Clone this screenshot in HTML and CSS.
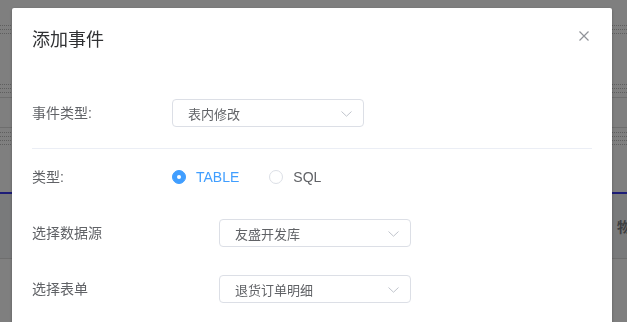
FILE: index.html
```html
<!DOCTYPE html>
<html lang="zh-CN">
    <head>
        <meta charset="utf-8">
        <title>添加事件</title>
        <meta name="viewport" content="width=device-width, initial-scale=1">
        <link rel="stylesheet" href="styles.css">
    </head>
    <body>

       <!-- page behind the dialog -->
       <div class="page">
           <div class="page__dots page__dots--first"><span></span><span></span><span></span></div>
           <div class="page__dots page__dots--second"><span></span><span></span><span></span></div>
           <div class="page__rule page__rule--a"></div>
           <div class="page__rule page__rule--b"></div>
           <div class="page__dots page__dots--third"><span></span><span></span><span></span><span></span></div>
           <div class="page__rule page__rule--blue"></div>
           <div class="page__head"><span class="page__head-text">物</span></div>
           <div class="page__rule"></div>
       </div>

       <div class="dialog active">
           <div class="dialog__panel">
               <div class="dialog__header">
                   <span class="dialog__title">添加事件</span>
                   <button class="dialog__close" aria-label="关闭">
                       <svg width="10" height="10" viewBox="0 0 10 10">
                           <path d="M0.5 0.5 L9.5 9.5 M9.5 0.5 L0.5 9.5" stroke="#909399" stroke-width="1.2" fill="none"/>
                       </svg>
                   </button>
               </div>

               <div class="dialog__body">
                   <div class="form-row">
                       <label class="form-row__label">事件类型:</label>
                       <div class="select">
                           <span class="select__value">表内修改</span>
                           <svg class="select__arrow" width="11" height="6" viewBox="0 0 11 6">
                               <path d="M0.5 0.5 L5.5 5.2 L10.5 0.5" stroke="#c0c4cc" stroke-width="1" fill="none"/>
                           </svg>
                       </div>
                   </div>

                   <div class="divider"></div>

                   <div class="form-row form-row--radio">
                       <label class="form-row__label">类型:</label>
                       <div class="radio-group">
                           <label class="radio radio--checked">
                               <span class="radio__dot"></span>
                               <span class="radio__text">TABLE</span>
                           </label>
                           <label class="radio">
                               <span class="radio__dot"></span>
                               <span class="radio__text">SQL</span>
                           </label>
                       </div>
                   </div>

                   <div class="form-row form-row--wide">
                       <label class="form-row__label">选择数据源</label>
                       <div class="select">
                           <span class="select__value">友盛开发库</span>
                           <svg class="select__arrow" width="11" height="6" viewBox="0 0 11 6">
                               <path d="M0.5 0.5 L5.5 5.2 L10.5 0.5" stroke="#c0c4cc" stroke-width="1" fill="none"/>
                           </svg>
                       </div>
                   </div>

                   <div class="form-row form-row--wide">
                       <label class="form-row__label">选择表单</label>
                       <div class="select">
                           <span class="select__value">退货订单明细</span>
                           <svg class="select__arrow" width="11" height="6" viewBox="0 0 11 6">
                               <path d="M0.5 0.5 L5.5 5.2 L10.5 0.5" stroke="#c0c4cc" stroke-width="1" fill="none"/>
                           </svg>
                       </div>
                   </div>
               </div>
           </div>
       </div>

    </body>
</html>
```

FILE: styles.css
```css
* {
    box-sizing: border-box;
}

body {
    margin: 0;
    padding: 0;
    background-color: #fff;
    font-family: "Liberation Sans", "Noto Sans CJK SC", sans-serif;
    overflow: hidden;
}

/* page behind the overlay */

.page {
    height: 322px;
    padding-top: 25px;
}

.page__dots span {
    display: block;
    height: 4px;
    border-top: 1px dotted #bcbcbc;
}

.page__dots--second {
    margin-top: 47px;
}

.page__dots--third {
    margin-top: 4px;
}

.page__rule {
    height: 1px;
    background-color: #dcdcdc;
}

.page__rule--a {
    margin-top: 1px;
}

.page__rule--b {
    margin-top: 29px;
}

.page__rule--blue {
    margin-top: 44px;
    height: 2px;
    background-color: #3a3af0;
}

.page__head {
    height: 64px;
    background-color: #f3f4f6;
    display: flex;
    align-items: center;
    padding-left: 617px;
    white-space: nowrap;
    font-size: 14px;
    color: #7a7c80;
    font-weight: bold;
}

/* dialog */

.dialog {
    position: fixed;
    top: 0;
    right: 0;
    bottom: 0;
    left: 0;
    background-color: rgba(0,0,0,0.5);
    display: flex;
    align-items: flex-start;
}

.dialog__panel {
    background-color: #fff;
    margin: 8px 0 0 12px;
    width: 600px;
    height: 340px;
    border-radius: 2px;
    box-shadow: 0 1px 3px rgba(0,0,0,0.3);
}

.dialog__header {
    display: flex;
    justify-content: space-between;
    align-items: flex-start;
    padding: 20px 23px 10px 20px;
}

.dialog__title {
    font-size: 18px;
    line-height: 24px;
    color: #303133;
}

.dialog__close {
    border: 0;
    padding: 0;
    margin-top: 3px;
    background: none;
    display: flex;
    cursor: pointer;
}

.dialog__body {
    padding: 37px 20px 0;
}

.form-row {
    display: flex;
    align-items: center;
    height: 28px;
}

.form-row__label {
    width: 140px;
    flex-shrink: 0;
    font-size: 14px;
    color: #606266;
    line-height: 28px;
}

.form-row--wide {
    margin-top: 28px;
}

.form-row--wide .form-row__label {
    width: 187px;
}

.form-row--radio {
    margin-top: 14px;
}

.divider {
    margin-top: 21px;
    height: 1px;
    background-color: #ebeef5;
}

.select {
    width: 192px;
    height: 28px;
    border: 1px solid #dcdfe6;
    border-radius: 4px;
    display: flex;
    align-items: center;
    justify-content: space-between;
    padding: 0 11px 0 15px;
}

.select__value {
    font-size: 13px;
    color: #606266;
}

.select__arrow {
    margin-top: 1px;
}

.radio-group {
    display: flex;
    align-items: center;
}

.radio {
    display: flex;
    align-items: center;
    margin-right: 30px;
    cursor: pointer;
}

.radio__dot {
    width: 14px;
    height: 14px;
    border: 1px solid #dcdfe6;
    border-radius: 50%;
    background-color: #fff;
    margin-right: 10px;
    display: flex;
    align-items: center;
    justify-content: center;
}

.radio__text {
    font-size: 14px;
    color: #606266;
}

.radio--checked .radio__dot {
    background-color: #409eff;
    border-color: #409eff;
}

.radio--checked .radio__dot::after {
    content: "";
    width: 4px;
    height: 4px;
    border-radius: 50%;
    background-color: #fff;
}

.radio--checked .radio__text {
    color: #409eff;
}
```
